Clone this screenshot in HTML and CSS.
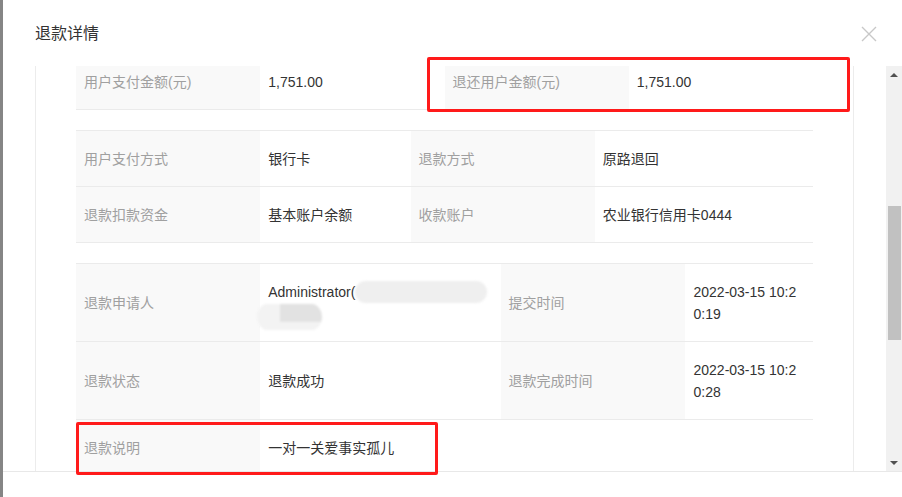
FILE: index.html
```html
<!DOCTYPE html>
<html lang="zh-CN">
<head>
    <meta charset="UTF-8">
    <title>退款详情</title>
    <link rel="stylesheet" href="styles.css">
</head>
<body>
<div class="dialog">
    <div class="dialog-header">
        <span class="dialog-title">退款详情</span>
        <a class="dialog-close">
            <svg width="16" height="16" viewBox="0 0 16 16"><path d="M1 1L15 15M15 1L1 15" stroke="#c8c8c8" stroke-width="1.4" fill="none"/></svg>
        </a>
    </div>
    <div class="dialog-main">
        <div class="dialog-body" id="refundBody">
            <div class="detail-box">
                <table class="info-table">
                    <colgroup><col style="width:25%"><col style="width:25%"><col style="width:25%"><col style="width:25%"></colgroup>
                    <tr>
                        <td class="label">用户支付金额(元)</td>
                        <td>1,751.00</td>
                        <td class="label">退还用户金额(元)</td>
                        <td>1,751.00</td>
                    </tr>
                </table>
                <table class="info-table">
                    <colgroup><col style="width:25%"><col style="width:20.4%"><col style="width:25%"><col style="width:29.6%"></colgroup>
                    <tr>
                        <td class="label">用户支付方式</td>
                        <td>银行卡</td>
                        <td class="label">退款方式</td>
                        <td>原路退回</td>
                    </tr>
                    <tr>
                        <td class="label">退款扣款资金</td>
                        <td>基本账户余额</td>
                        <td class="label">收款账户</td>
                        <td>农业银行信用卡0444</td>
                    </tr>
                </table>
                <table class="info-table">
                    <colgroup><col style="width:25%"><col style="width:32.6%"><col style="width:25.1%"><col style="width:17.3%"></colgroup>
                    <tr>
                        <td class="label">退款申请人</td>
                        <td>Administrator(<span class="smudge smudge-a"></span><br><span class="smudge smudge-b"></span></td>
                        <td class="label">提交时间</td>
                        <td class="time">2022-03-15 10:20:19</td>
                    </tr>
                    <tr>
                        <td class="label">退款状态</td>
                        <td>退款成功</td>
                        <td class="label">退款完成时间</td>
                        <td class="time">2022-03-15 10:20:28</td>
                    </tr>
                    <tr>
                        <td class="label">退款说明</td>
                        <td colspan="3">一对一关爱事实孤儿</td>
                    </tr>
                </table>
            </div>
        </div>
        <div class="fake-scroll">
            <div class="scroll-btn"><i class="arrow-up"></i></div>
            <div class="scroll-track"><div class="scroll-thumb"></div></div>
            <div class="scroll-btn"><i class="arrow-down"></i></div>
        </div>
    </div>
    <div class="dialog-footer"></div>

    <div class="mark mark-amount"></div>
    <div class="mark mark-remark"></div>
</div>

<script>
    document.getElementById("refundBody").scrollTop = 13;
</script>
</body>
</html>
```

FILE: styles.css
```css
body {
    margin: 0;
    background: #858585;
    font-family: "Liberation Sans", "Noto Sans CJK SC", sans-serif;
    font-size: 14px;
    color: #333;
}

.dialog {
    position: relative;
    margin-left: 3px;
    height: 497px;
    background: #fff;
}

.dialog-header {
    display: flex;
    align-items: center;
    justify-content: space-between;
    height: 66px;
    padding: 0 25px 2px 32px;
    box-sizing: border-box;
}

.dialog-title {
    font-size: 16px;
    color: #333;
}

.dialog-close {
    display: flex;
    margin-top: 3px;
}

.dialog-main {
    display: flex;
    height: 405px;
    border-bottom: 1px solid #e8e8e8;
}

.dialog-body {
    flex: 1;
    overflow: hidden;
}

.detail-box {
    margin: 0 32px;
    padding: 0 40px 40px;
    border-left: 1px solid #ececec;
    border-right: 1px solid #ececec;
}

.info-table {
    width: 100%;
    table-layout: fixed;
    border-collapse: separate;
    border-spacing: 0;
    border-top: 1px solid #ebebeb;
    margin-bottom: 20px;
}

.info-table td {
    padding: 17px 12px 16px 8px;
    line-height: 22px;
    border-bottom: 1px solid #ebebeb;
    vertical-align: middle;
    color: #333;
}

.info-table td.label {
    background: #f9f9f9;
    color: #a0a0a0;
}

.info-table td.time {
    word-break: break-all;
}

/* redacted name */
.smudge {
    display: inline-block;
    vertical-align: top;
    height: 22px;
    filter: blur(1px);
}

.smudge-a {
    width: 132px;
    background: #efefef;
    border-radius: 11px;
}

.smudge-b {
    width: 65px;
    margin-left: -11px;
    border-radius: 12px;
    background: linear-gradient(#e2e2e2, #e2e2e2) 23px 0 / 42px 15px no-repeat, #f3f3f3;
    transform: translateY(3px) scaleY(1.2);
}

.fake-scroll {
    display: flex;
    flex-direction: column;
    width: 16px;
    background: #f1f1f1;
}

.scroll-btn {
    height: 17px;
    display: flex;
    align-items: center;
    justify-content: center;
}

.arrow-up {
    border-left: 4px solid transparent;
    border-right: 4px solid transparent;
    border-bottom: 4px solid #505050;
}

.arrow-down {
    border-left: 4px solid transparent;
    border-right: 4px solid transparent;
    border-top: 4px solid #505050;
}

.scroll-track {
    flex: 1;
    padding-top: 123px;
}

.scroll-thumb {
    width: 13px;
    height: 134px;
    margin-left: 2px;
    background: #c1c1c1;
}

.dialog-footer {
    height: 25px;
}

/* red annotation boxes */
.mark {
    position: absolute;
    border: 3px solid #ff1a1a;
    border-radius: 2px;
    box-sizing: border-box;
}

.mark-amount {
    left: 424px;
    top: 57px;
    width: 423px;
    height: 55px;
}

.mark-remark {
    left: 73px;
    top: 422px;
    width: 362px;
    height: 53px;
}
```
